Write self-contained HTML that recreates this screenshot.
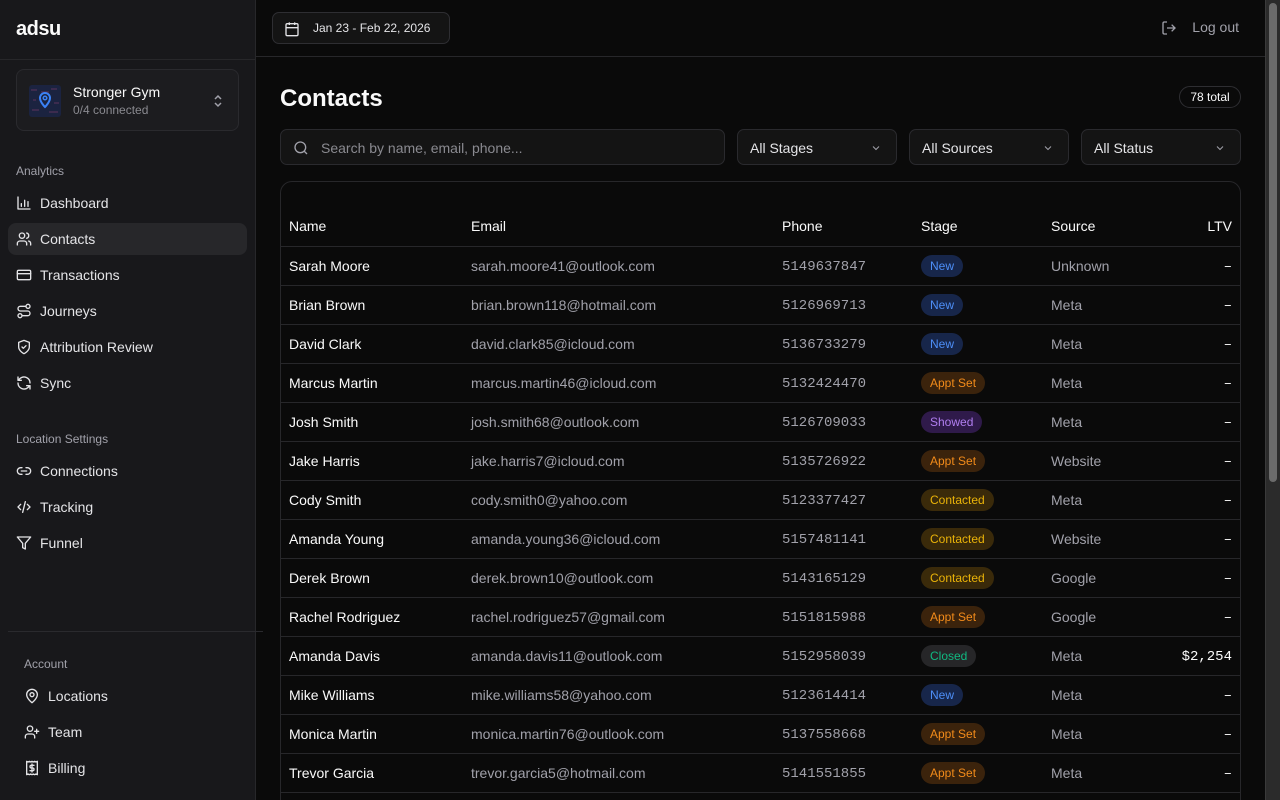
<!DOCTYPE html>
<html><head><meta charset="utf-8"><style>
*{box-sizing:border-box;margin:0;padding:0}
html,body{width:1280px;height:800px;overflow:hidden}
body{background:#0a0a0a;font-family:"Liberation Sans",sans-serif;color:#fafafa;position:relative}
.sb{position:absolute;left:0;top:0;width:256px;height:800px;background:#18181b;border-right:1px solid #27272a}
.logo{height:60px;border-bottom:1px solid #27272a;padding:18px 16px;font-size:20px;font-weight:700;letter-spacing:-0.5px}
.loc{position:absolute;left:16px;top:69px;width:223px;height:62px;border:1px solid #2a2a2e;border-radius:8px;background:#1c1c1f}
.loc .av{position:absolute;left:12px;top:15px;width:32px;height:32px;background:#1b2340;border-radius:3px}
.loc .t1{position:absolute;left:56px;top:14px;font-size:14px;color:#fafafa}
.loc .t2{position:absolute;left:56px;top:33px;font-size:12px;color:#8a8a90}
.sec{position:absolute;left:16px;font-size:12px;color:#a1a1aa}
.it{position:absolute;left:8px;width:239px;height:32px;border-radius:8px;display:flex;align-items:center;padding-left:8px;font-size:14px;color:#e4e4e7}
.it svg{width:16px;height:16px;margin-right:8px;stroke:#e4e4e7;fill:none;stroke-width:2;stroke-linecap:round;stroke-linejoin:round}
.act{background:#27272a}
.top{position:absolute;left:256px;top:0;width:1009px;height:57px;border-bottom:1px solid #27272a}
.date{position:absolute;left:16px;top:12px;width:178px;height:32px;border:1px solid #2e2e32;border-radius:7px;background:#141414;font-size:12px;color:#e4e4e7;padding:8px 0 0 40px}
.date svg{position:absolute;left:11px;top:8px}
.lo{position:absolute;right:26px;top:19px;font-size:14px;color:#a1a1aa}
.lo svg{position:absolute;left:-31px;top:1px}
h1{position:absolute;left:280px;top:85px;font-size:24px;font-weight:700}
.tot{position:absolute;left:1179px;top:86px;width:62px;height:22px;border:1px solid #2e2e32;border-radius:11px;font-size:12px;text-align:center;line-height:20px}
.srch{position:absolute;left:280px;top:129px;width:445px;height:36px;border:1px solid #2a2a2e;border-radius:7px;background:#141414;font-size:14px;color:#8a8a90;padding:10px 0 0 40px}
.srch svg{position:absolute;left:12px;top:10px}
.sel{position:absolute;top:129px;width:160px;height:36px;border:1px solid #2a2a2e;border-radius:7px;background:#141414;font-size:14px;color:#e4e4e7;padding:10px 0 0 12px}
.sel svg{position:absolute;right:14px;top:12px}
.tbl{position:absolute;left:280px;top:181px;width:961px;height:640px;border:1px solid #27272a;border-radius:12px}
.row{position:absolute;left:0;width:959px;height:39px;border-bottom:1px solid #27272a;font-size:14px}
.row div{position:absolute;top:11px}
.c1{left:8px;color:#fafafa}.c2{left:190px;color:#a1a1aa}.row .c3{left:501px;top:12px;color:#a1a1aa;font-family:"Liberation Mono",monospace}
.c5{left:770px;color:#a1a1aa}.row .c6{right:8px;top:12px;color:#fafafa;font-family:"Liberation Mono",monospace}
.row .c4{left:640px;top:8px;height:22px;border-radius:11px;padding:0 9px;font-size:12px;line-height:22px}
.hd div{color:#fafafa!important;font-family:"Liberation Sans",sans-serif!important;top:10px!important}
.new{background:#17264a;color:#4d8ef7}.appt{background:#3b230c;color:#f28b1a}.show{background:#2f1a4a;color:#b07ef0}.cont{background:#3a2a0a;color:#eab308}.clo{background:#262628;color:#10b981}
.scr{position:absolute;left:1265px;top:0;width:15px;height:800px;background:#2b2b2b;border-left:1px solid #3a3a3a}
.th{position:absolute;left:3px;top:3px;width:8px;height:479px;background:#6b6b6b;border-radius:4px}
</style></head><body>
<div class="sb">
<div class="logo">adsu</div>
<div class="loc"><div class="av"><svg width="32" height="32" viewBox="0 0 32 32"><g stroke="#7a3a6a" stroke-width="1" opacity=".7"><path d="M2 5h6M12 7h8M22 4h6M3 25h7M20 27h9M4 15h3M25 18h5"/></g><path d="M16 8a5 5 0 0 0-5 5c0 4 5 9 5 9s5-5 5-9a5 5 0 0 0-5-5z" fill="none" stroke="#3b82f6" stroke-width="2"/><circle cx="16" cy="13" r="1.8" fill="none" stroke="#3b82f6" stroke-width="1.5"/></svg></div><div class="t1">Stronger Gym</div><div class="t2">0/4 connected</div>
<svg style="position:absolute;left:195px;top:23px" width="12" height="16" viewBox="0 0 12 16" fill="none" stroke="#a1a1aa" stroke-width="1.5"><path d="M3 6l3-3 3 3M3 10l3 3 3-3"/></svg></div>
<div class="sec" style="top:164px">Analytics</div>
<div class="it" style="top:187px"><svg viewBox="0 0 24 24"><path d="M3 3v18h18M8 17v-4M13 17V8M18 17v-7"/></svg>Dashboard</div>
<div class="it act" style="top:223px"><svg viewBox="0 0 24 24"><circle cx="9" cy="7" r="4"/><path d="M2 21v-2a4 4 0 0 1 4-4h6a4 4 0 0 1 4 4v2M16 3.1a4 4 0 0 1 0 7.8M22 21v-2a4 4 0 0 0-3-3.9"/></svg>Contacts</div>
<div class="it" style="top:259px"><svg viewBox="0 0 24 24"><rect x="2" y="5" width="20" height="14" rx="2"/><path d="M2 10h20"/></svg>Transactions</div>
<div class="it" style="top:295px"><svg viewBox="0 0 24 24"><circle cx="6" cy="19" r="3"/><circle cx="18" cy="5" r="3"/><path d="M9 19h8.5a3.5 3.5 0 0 0 0-7h-11a3.5 3.5 0 0 1 0-7H15"/></svg>Journeys</div>
<div class="it" style="top:331px"><svg viewBox="0 0 24 24"><path d="M12 22s8-4 8-10V5l-8-3-8 3v7c0 6 8 10 8 10z"/><path d="M9 12l2 2 4-4"/></svg>Attribution Review</div>
<div class="it" style="top:367px"><svg viewBox="0 0 24 24"><path d="M21 12a9 9 0 0 0-15-6.7L3 8M3 3v5h5M3 12a9 9 0 0 0 15 6.7l3-2.7M21 21v-5h-5"/></svg>Sync</div>
<div class="sec" style="top:432px">Location Settings</div>
<div class="it" style="top:455px"><svg viewBox="0 0 24 24"><path d="M9 17H7A5 5 0 0 1 7 7h2M15 7h2a5 5 0 0 1 0 10h-2M8 12h8"/></svg>Connections</div>
<div class="it" style="top:491px"><svg viewBox="0 0 24 24"><path d="M7 8l-4 4 4 4M17 8l4 4-4 4M14 4l-4 16"/></svg>Tracking</div>
<div class="it" style="top:527px"><svg viewBox="0 0 24 24"><path d="M22 3H2l8 9.5V19l4 2v-8.5z"/></svg>Funnel</div>
<div style="position:absolute;left:8px;top:631px;width:255px;height:1px;background:#2a2a2e"></div>
<div class="sec" style="top:657px;left:24px">Account</div>
<div class="it" style="top:680px;left:16px"><svg viewBox="0 0 24 24"><path d="M20 10c0 6-8 12-8 12s-8-6-8-12a8 8 0 0 1 16 0z"/><circle cx="12" cy="10" r="3"/></svg>Locations</div>
<div class="it" style="top:716px;left:16px"><svg viewBox="0 0 24 24"><circle cx="9" cy="7" r="4"/><path d="M2 21v-2a4 4 0 0 1 4-4h6a4 4 0 0 1 4 4v2M19 8v6M22 11h-6"/></svg>Team</div>
<div class="it" style="top:752px;left:16px"><svg viewBox="0 0 24 24"><path d="M4 2v20l2-1 2 1 2-1 2 1 2-1 2 1 2-1 2 1V2l-2 1-2-1-2 1-2-1-2 1-2-1-2 1z"/><path d="M15 8h-4a2 2 0 0 0 0 4h2a2 2 0 0 1 0 4H9M12 6v12"/></svg>Billing</div>
</div>
<div class="top"><div class="date"><svg width="16" height="16" viewBox="0 0 24 24" fill="none" stroke="#e4e4e7" stroke-width="2"><rect x="3" y="4" width="18" height="18" rx="2"/><path d="M16 2v4M8 2v4M3 10h18"/></svg>Jan 23 - Feb 22, 2026</div>
<div class="lo"><svg width="16" height="16" viewBox="0 0 24 24" fill="none" stroke="#a1a1aa" stroke-width="2"><path d="M9 21H5a2 2 0 0 1-2-2V5a2 2 0 0 1 2-2h4M16 17l5-5-5-5M21 12H9"/></svg>Log out</div></div>
<h1>Contacts</h1><div class="tot">78 total</div>
<div class="srch"><svg width="16" height="16" viewBox="0 0 24 24" fill="none" stroke="#a1a1aa" stroke-width="2"><circle cx="11" cy="11" r="8"/><path d="M21 21l-4.3-4.3"/></svg>Search by name, email, phone...</div>
<div class="sel" style="left:737px">All Stages<svg width="12" height="12" viewBox="0 0 24 24" fill="none" stroke="#a1a1aa" stroke-width="2"><path d="M6 9l6 6 6-6"/></svg></div>
<div class="sel" style="left:909px">All Sources<svg width="12" height="12" viewBox="0 0 24 24" fill="none" stroke="#a1a1aa" stroke-width="2"><path d="M6 9l6 6 6-6"/></svg></div>
<div class="sel" style="left:1081px">All Status<svg width="12" height="12" viewBox="0 0 24 24" fill="none" stroke="#a1a1aa" stroke-width="2"><path d="M6 9l6 6 6-6"/></svg></div>
<div class="tbl">
<div class="row hd" style="top:26px"><div class="c1">Name</div><div class="c2">Email</div><div class="c3">Phone</div><div style="left:640px">Stage</div><div class="c5">Source</div><div class="c6">LTV</div></div>
<div class="row" style="top:65px"><div class="c1">Sarah Moore</div><div class="c2">sarah.moore41@outlook.com</div><div class="c3">5149637847</div><div class="c4 new">New</div><div class="c5">Unknown</div><div class="c6">–</div></div>
<div class="row" style="top:104px"><div class="c1">Brian Brown</div><div class="c2">brian.brown118@hotmail.com</div><div class="c3">5126969713</div><div class="c4 new">New</div><div class="c5">Meta</div><div class="c6">–</div></div>
<div class="row" style="top:143px"><div class="c1">David Clark</div><div class="c2">david.clark85@icloud.com</div><div class="c3">5136733279</div><div class="c4 new">New</div><div class="c5">Meta</div><div class="c6">–</div></div>
<div class="row" style="top:182px"><div class="c1">Marcus Martin</div><div class="c2">marcus.martin46@icloud.com</div><div class="c3">5132424470</div><div class="c4 appt">Appt Set</div><div class="c5">Meta</div><div class="c6">–</div></div>
<div class="row" style="top:221px"><div class="c1">Josh Smith</div><div class="c2">josh.smith68@outlook.com</div><div class="c3">5126709033</div><div class="c4 show">Showed</div><div class="c5">Meta</div><div class="c6">–</div></div>
<div class="row" style="top:260px"><div class="c1">Jake Harris</div><div class="c2">jake.harris7@icloud.com</div><div class="c3">5135726922</div><div class="c4 appt">Appt Set</div><div class="c5">Website</div><div class="c6">–</div></div>
<div class="row" style="top:299px"><div class="c1">Cody Smith</div><div class="c2">cody.smith0@yahoo.com</div><div class="c3">5123377427</div><div class="c4 cont">Contacted</div><div class="c5">Meta</div><div class="c6">–</div></div>
<div class="row" style="top:338px"><div class="c1">Amanda Young</div><div class="c2">amanda.young36@icloud.com</div><div class="c3">5157481141</div><div class="c4 cont">Contacted</div><div class="c5">Website</div><div class="c6">–</div></div>
<div class="row" style="top:377px"><div class="c1">Derek Brown</div><div class="c2">derek.brown10@outlook.com</div><div class="c3">5143165129</div><div class="c4 cont">Contacted</div><div class="c5">Google</div><div class="c6">–</div></div>
<div class="row" style="top:416px"><div class="c1">Rachel Rodriguez</div><div class="c2">rachel.rodriguez57@gmail.com</div><div class="c3">5151815988</div><div class="c4 appt">Appt Set</div><div class="c5">Google</div><div class="c6">–</div></div>
<div class="row" style="top:455px"><div class="c1">Amanda Davis</div><div class="c2">amanda.davis11@outlook.com</div><div class="c3">5152958039</div><div class="c4 clo">Closed</div><div class="c5">Meta</div><div class="c6">$2,254</div></div>
<div class="row" style="top:494px"><div class="c1">Mike Williams</div><div class="c2">mike.williams58@yahoo.com</div><div class="c3">5123614414</div><div class="c4 new">New</div><div class="c5">Meta</div><div class="c6">–</div></div>
<div class="row" style="top:533px"><div class="c1">Monica Martin</div><div class="c2">monica.martin76@outlook.com</div><div class="c3">5137558668</div><div class="c4 appt">Appt Set</div><div class="c5">Meta</div><div class="c6">–</div></div>
<div class="row" style="top:572px"><div class="c1">Trevor Garcia</div><div class="c2">trevor.garcia5@hotmail.com</div><div class="c3">5141551855</div><div class="c4 appt">Appt Set</div><div class="c5">Meta</div><div class="c6">–</div></div>
</div>
<div class="scr"><div class="th"></div></div>
</body></html>
